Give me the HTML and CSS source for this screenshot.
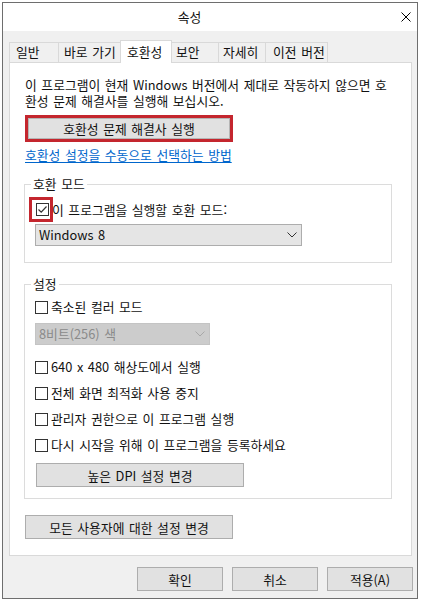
FILE: index.html
```html
<!DOCTYPE html>
<html lang="ko">
<head>
<meta charset="utf-8">
<title>속성</title>
<link rel="stylesheet" href="styles.css">
</head>
<body>
<div class="window">
  <div class="titlebar">
    <span class="title">속성</span>
    <span class="close"><svg width="10" height="10" viewBox="0 0 10 10"><path d="M0.5 0.5 L9.5 9.5 M9.5 0.5 L0.5 9.5" stroke="#000" stroke-width="1" fill="none"/></svg></span>
  </div>
  <div class="tabs">
    <div class="tab t1">일반</div>
    <div class="tab t2">바로 가기</div>
    <div class="tab t3 active">호환성</div>
    <div class="tab t4">보안</div>
    <div class="tab t5">자세히</div>
    <div class="tab t6">이전 버전</div>
  </div>
  <div class="panel">
    <p class="desc">이 프로그램이 현재 Windows 버전에서 제대로 작동하지 않으면 호<br>환성 문제 해결사를 실행해 보십시오.</p>
    <div class="hl-btn"><button class="btn">호환성 문제 해결사 실행</button></div>
    <a class="link">호환성 설정을 수동으로 선택하는 방법</a>

    <fieldset class="group g1">
      <legend>호환 모드</legend>
      <div class="check-row hl-row">
        <span class="hl-box"><span class="cb"><svg width="11" height="11" viewBox="0 0 11 11"><path d="M1.5 5.5 L4.2 8.2 L9.5 2.5" stroke="#333" stroke-width="1.2" fill="none"/></svg></span></span>
        <span>이 프로그램을 실행할 호환 모드:</span>
      </div>
      <div class="select sel-win">
        <span>Windows 8</span>
        <svg width="10" height="6" viewBox="0 0 10 6"><path d="M0.5 0.5 L5 5 L9.5 0.5" stroke="#333" stroke-width="1" fill="none"/></svg>
      </div>
    </fieldset>

    <fieldset class="group g2">
      <legend>설정</legend>
      <div class="check-row"><span class="cb"></span><span>축소된 컬러 모드</span></div>
      <div class="select sel-color disabled">
        <span>8비트(256) 색</span>
        <svg width="10" height="6" viewBox="0 0 10 6"><path d="M0.5 0.5 L5 5 L9.5 0.5" stroke="#a8a8a8" stroke-width="1" fill="none"/></svg>
      </div>
      <div class="check-row r-first"><span class="cb"></span><span>640 x 480 해상도에서 실행</span></div>
      <div class="check-row r-next"><span class="cb"></span><span>전체 화면 최적화 사용 중지</span></div>
      <div class="check-row r-next"><span class="cb"></span><span>관리자 권한으로 이 프로그램 실행</span></div>
      <div class="check-row r-next"><span class="cb"></span><span>다시 시작을 위해 이 프로그램을 등록하세요</span></div>
      <button class="btn btn-dpi">높은 DPI 설정 변경</button>
    </fieldset>

    <button class="btn btn-all">모든 사용자에 대한 설정 변경</button>
  </div>
  <div class="actions">
    <button class="btn btn-act">확인</button>
    <button class="btn btn-act">취소</button>
    <button class="btn btn-act">적용(A)</button>
  </div>
</div>
</body>
</html>
```

FILE: styles.css
```css
* { box-sizing: border-box; }

body {
  margin: 0;
  background: #fff;
  font-family: "Noto Sans CJK KR", "Noto Sans", sans-serif;
  font-size: 12.8px;
  word-spacing: 1px;
  color: #111;
}

.window {
  margin: 2px 0 0 2px;
  width: 416px;
  height: 597px;
  border: 1px solid #6e6e6e;
  background: #f0f0f0;
  display: flex;
  flex-direction: column;
}

.titlebar {
  height: 28px;
  flex: none;
  background: #fff;
  display: flex;
  align-items: center;
}

.title {
  flex: 1;
  text-align: center;
  padding-right: 19px;
  line-height: 16px;
}

.close {
  width: 22px;
  display: flex;
  justify-content: center;
  align-items: center;
}
.close svg { display: block; }

.tabs {
  display: flex;
  align-items: flex-end;
  height: 22px;
  flex: none;
  margin: 9px 0 0 6px;
}

.tab {
  height: 20px;
  border: 1px solid #d9d9d9;
  border-bottom: none;
  margin-right: -1px;
  padding-left: 6px;
  line-height: 18px;
  background: #f0f0f0;
  white-space: nowrap;
}
.t1 { width: 50px; }
.t2 { width: 63px; padding-left: 5px; }
.t3 { width: 52px; }
.t4 { width: 48px; padding-left: 4px; }
.t5 { width: 48px; padding-left: 4px; }
.t6 { width: 63px; padding-left: 7px; }

.tab.active {
  height: 23px;
  margin-bottom: -1px;
  padding-top: 2px;
  background: #fff;
  position: relative;
  z-index: 1;
}

.panel {
  flex: none;
  margin-left: 6px;
  width: 403px;
  height: 494px;
  background: #fff;
  border: 1px solid #d9d9d9;
  padding: 14px 0 0 15px;
}

.desc {
  margin: 0;
  line-height: 16px;
}

.btn {
  font-family: inherit;
  font-size: inherit;
  word-spacing: inherit;
  color: #111;
  padding: 0;
  height: 24px;
  border: 1px solid #adadad;
  background: #e1e1e1;
  display: block;
}

.hl-btn {
  margin-top: 6px;
  width: 208px;
  height: 27px;
  border: 3px solid #c4262e;
  display: flex;
}
.hl-btn .btn {
  flex: 1;
  height: auto;
  border-color: #b5b5b5;
}

.link {
  display: block;
  width: max-content;
  margin-top: 5px;
  line-height: 16px;
  color: #0066cc;
  text-decoration: underline;
  text-underline-offset: 2px;
}

.group {
  margin: 13px 0 0 -1px;
  width: 368px;
  border: 1px solid #dcdcdc;
  padding: 0 0 0 10px;
}
.group legend {
  padding: 0 2px;
  margin-left: -4px;
  line-height: 16px;
}
.g1 { padding-top: 5px; padding-bottom: 16px; }
.g2 { padding-top: 6px; padding-bottom: 11px; }

.check-row {
  display: flex;
  align-items: center;
  height: 18px;
  line-height: 16px;
  white-space: nowrap;
}
.r-first { margin-top: 13px; }
.r-next { margin-top: 8px; }

.cb {
  flex: none;
  width: 13px;
  height: 13px;
  border: 1px solid #333;
  background: #fff;
  margin-right: 3px;
  display: flex;
}
.cb svg { display: block; }

.hl-row { height: 25px; }
.hl-box {
  flex: none;
  width: 24px;
  height: 25px;
  border: 3px solid #c4262e;
  margin-left: -6px;
  margin-right: -1px;
  display: flex;
  align-items: center;
  justify-content: center;
}
.hl-box .cb { margin: 0 0 0 2px; }

.select {
  height: 22px;
  background: #e5e5e5;
  border: 1px solid #adadad;
  display: flex;
  align-items: center;
  justify-content: space-between;
  padding: 0 4px 0 3px;
  line-height: 16px;
}
.select svg { display: block; }
.sel-win { margin-top: 2px; width: 267px; }
.sel-color { margin-top: 7px; width: 175px; }
.select.disabled {
  background: #cccccc;
  border-color: #c4c4c4;
  color: #8a8a8a;
}

.btn-dpi {
  margin: 9px 0 0 1px;
  width: 208px;
}

.btn-all {
  margin-top: 16px;
  width: 208px;
}

.actions {
  flex: none;
  display: flex;
  justify-content: flex-end;
  gap: 9px;
  margin-top: 11px;
  padding-right: 4px;
}
.btn-act { width: 86px; }
```
